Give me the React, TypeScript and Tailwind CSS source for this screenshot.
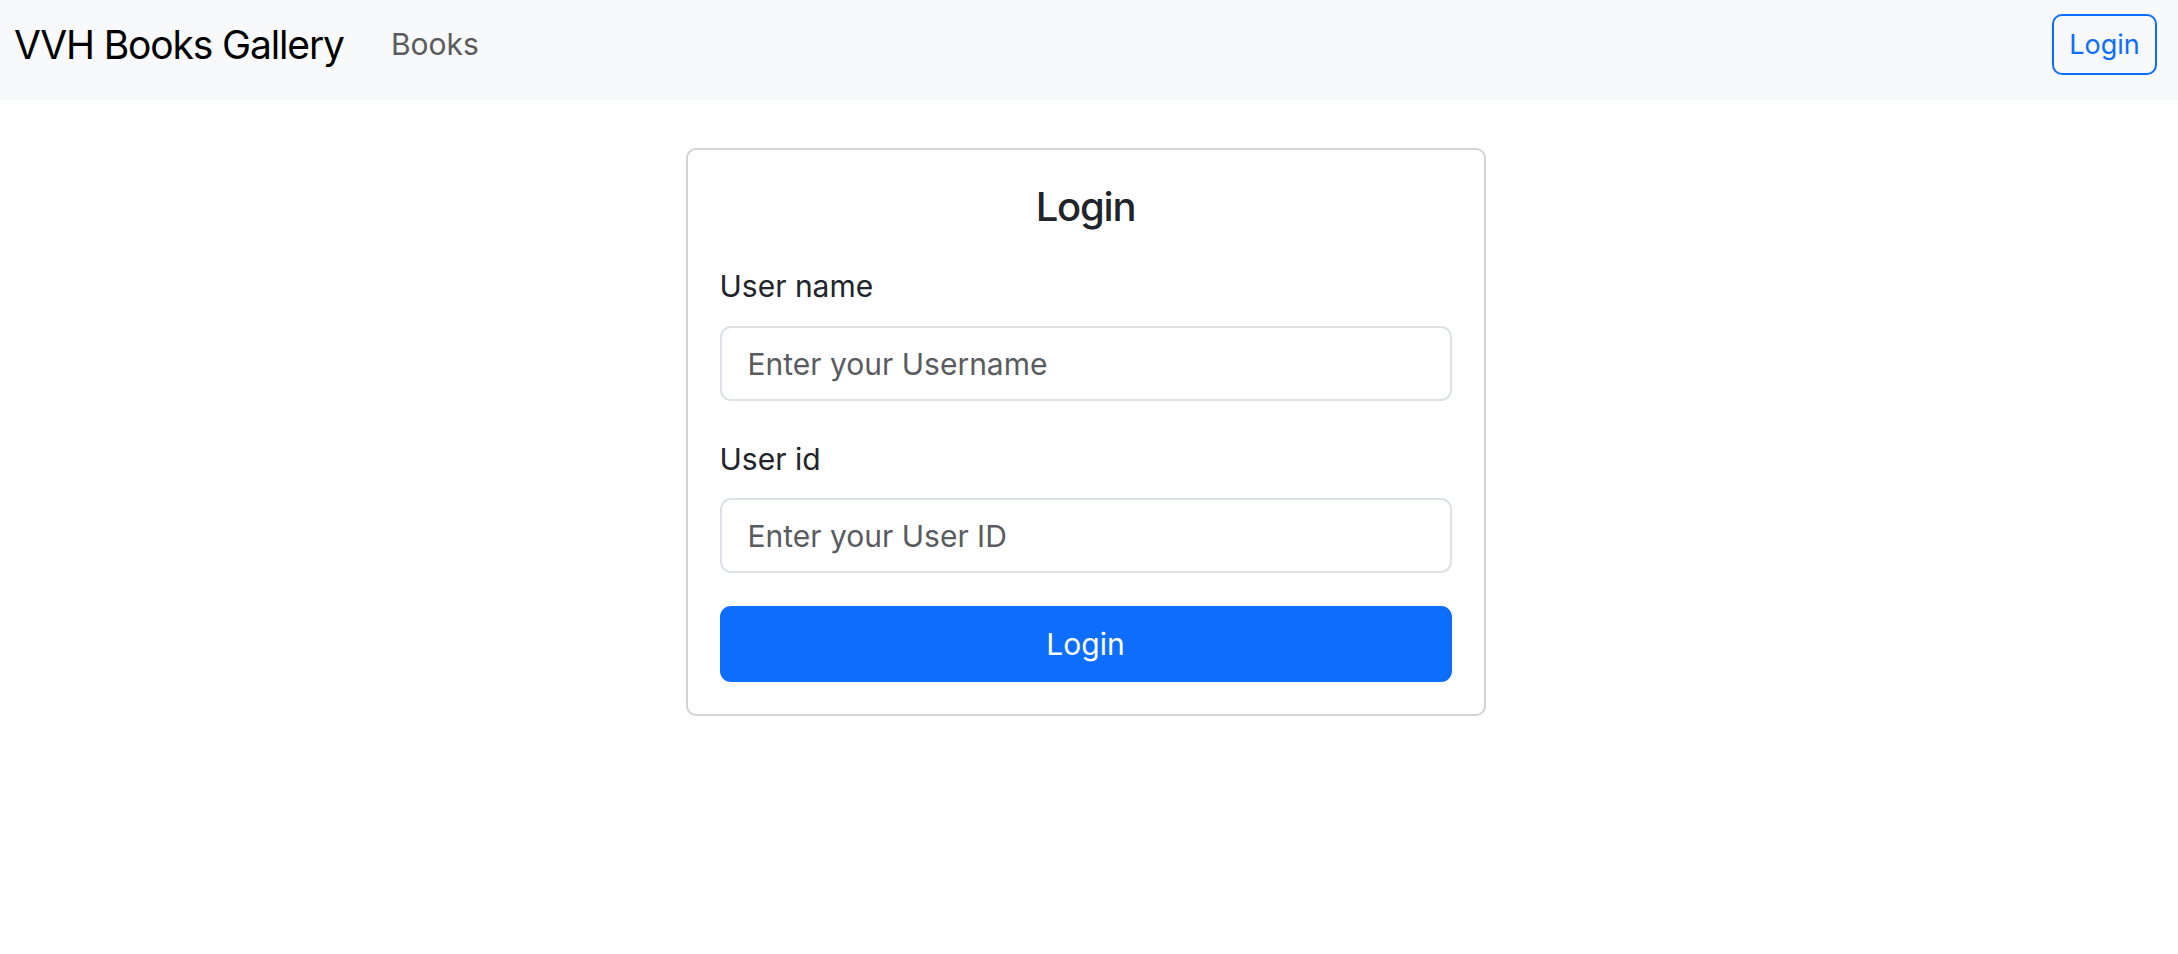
import React from "react";

export default function App() {
  return (
    <div className="min-h-screen w-full bg-white font-['Inter',sans-serif] text-[#212529]">
      <nav className="flex h-[100px] items-center bg-[#f8f9fa] pb-[12px] pl-[14px] pr-[21px]">
        <span className="text-[39px] leading-none tracking-[-1.15px] text-black">VVH Books Gallery</span>
        <a className="ml-[47px] text-[30px] leading-none text-[#5a5b5c]">Books</a>
        <button className="ml-auto flex h-[61px] w-[105px] items-center justify-center rounded-[10px] border-2 border-[#0d6efd] text-[27px] leading-none text-[#0d6efd]">
          Login
        </button>
      </nav>

      <div className="flex justify-center pr-[7px] pt-[48px]">
        <div className="flex w-[800px] flex-col rounded-[10px] border-2 border-[#d3d3d3] px-[32px] pb-[32px] pt-[33px]">
          <h2 className="text-center text-[40px] font-medium leading-[48px] tracking-[-1.2px] text-[#212529]">Login</h2>

          <label className="mt-[33px] text-[30px] leading-[45px] text-[#212529]">User name</label>
          <input
            className="mt-[17px] h-[75px] w-full rounded-[11px] border-2 border-[#dee2e6] px-[26px] text-[30px] text-[#212529] outline-none placeholder:text-[#595c5f]"
            placeholder="Enter your Username"
          />

          <label className="mt-[36px] text-[30px] leading-[45px] text-[#212529]">User id</label>
          <input
            className="mt-[16px] h-[75px] w-full rounded-[11px] border-2 border-[#dee2e6] px-[26px] text-[30px] text-[#212529] outline-none placeholder:text-[#595c5f]"
            placeholder="Enter your User ID"
          />

          <button className="mt-[33px] flex h-[76px] w-full items-center justify-center rounded-[11px] bg-[#0d6efd] text-[30px] leading-none text-white">
            Login
          </button>
        </div>
      </div>
    </div>
  );
}
